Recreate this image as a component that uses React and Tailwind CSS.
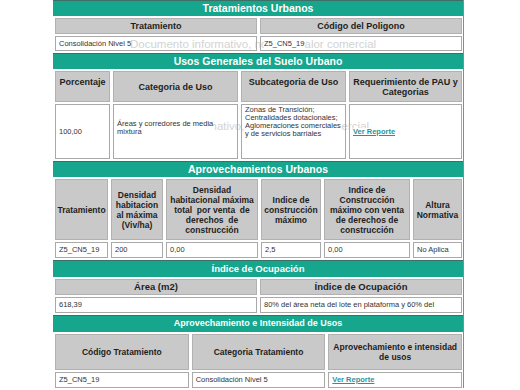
import React from 'react';

const Bar = ({ children, size = 'text-[10.5px]', h = 'h-[16px]' }) => (
  <div className={`${h} -ml-[2px] -mr-[1px] bg-[#16a68d] border-t border-[#3d6f66] flex items-center justify-center text-white font-bold ${size}`}>
    {children}
  </div>
);

const Hd = ({ children, w = 'flex-1', size = 'text-[8.5px]', align = 'items-center', extra = '' }) => (
  <div className={`${w} bg-[#c9c9c9] border border-[#b1b1b1] flex ${align} justify-center text-center font-bold ${size} leading-[10px] text-[#1e1e1e] ${extra}`}>
    <div>{children}</div>
  </div>
);

const Td = ({ children, w = 'flex-1', align = 'items-center', extra = '' }) => (
  <div className={`relative ${w} border border-[#a9a9a9] flex ${align} px-[3px] text-[7.5px] leading-[8px] text-[#333] ${extra}`}>
    <span className="bg-white">{children}</span>
  </div>
);

const Link = () => (
  <span className="font-bold underline text-[#1f95a0]">Ver Reporte</span>
);

export default function App() {
  return (
    <div className="min-h-[390px] bg-white" style={{ fontFamily: '"Liberation Sans", Arial, sans-serif' }}>
      <div className="relative ml-[53px] w-[411px] border-r border-[#8a8a8a] pl-[2px] pr-[1px] flex flex-col gap-[2px]">
        {/* marcas de agua */}
        <div className="absolute left-[77px] top-[38px] text-[11.5px] leading-[13px] text-[#d3d3d3] whitespace-nowrap">
          Documento informativo, no tiene valor comercial
        </div>
        <div className="absolute left-[70px] top-[120px] text-[11.5px] leading-[13px] text-[#d3d3d3] whitespace-nowrap">
          Documento informativo, no tiene valor comercial
        </div>

        {/* Tratamientos Urbanos */}
        <Bar>Tratamientos Urbanos</Bar>
        <div className="flex gap-[3px] h-[16px]">
          <Hd size="text-[9px]">Tratamiento</Hd>
          <Hd size="text-[9px]">Código del Poligono</Hd>
        </div>
        <div className="flex gap-[3px] h-[15px]">
          <Td>Consolidación Nivel 5</Td>
          <Td>Z5_CN5_19</Td>
        </div>

        {/* Usos Generales */}
        <Bar>Usos Generales del Suelo Urbano</Bar>
        <div className="flex gap-[3px] h-[31px]">
          <Hd w="w-[55px]" size="text-[9px]" align="items-start" extra="pt-[5px]">Porcentaje</Hd>
          <Hd w="w-[125px]" size="text-[9px]">Categoria de Uso</Hd>
          <Hd w="w-[105px]" size="text-[9px]" align="items-start" extra="pt-[5px]">Subcategoria de Uso</Hd>
          <Hd w="flex-1" size="text-[9px]" align="items-start" extra="pt-[5px]">Requerimiento de PAU y<br />Categorias</Hd>
        </div>
        <div className="flex gap-[3px] h-[55px]">
          <Td w="w-[55px]">100,00</Td>
          <Td w="w-[125px]" extra="pb-[8px]">Áreas y corredores de media<br />mixtura</Td>
          <Td w="w-[105px]" align="items-start" extra="pt-[1px]">
            Zonas de Transición;<br />Centralidades dotacionales;<br />Aglomeraciones comerciales<br />y de servicios barriales
          </Td>
          <Td w="flex-1"><Link /></Td>
        </div>

        {/* Aprovechamientos */}
        <Bar>Aprovechamientos Urbanos</Bar>
        <div className="flex gap-[3px] h-[61px]">
          <Hd w="w-[53px]">Tratamiento</Hd>
          <Hd w="w-[52px]">Densidad<br />habitacion<br />al máxima<br />(Viv/ha)</Hd>
          <Hd w="w-[92px]">Densidad<br />habitacional máxima<br />total&nbsp; por venta&nbsp; de<br />derechos&nbsp; de<br />construcción</Hd>
          <Hd w="w-[60px]">Indice de<br />construcción<br />máximo</Hd>
          <Hd w="w-[86px]">Indice de<br />Construcción<br />máximo con venta<br />de derechos de<br />construcción</Hd>
          <Hd w="flex-1">Altura<br />Normativa</Hd>
        </div>
        <div className="flex gap-[3px] h-[16px]">
          <Td w="w-[53px]">Z5_CN5_19</Td>
          <Td w="w-[52px]">200</Td>
          <Td w="w-[92px]">0,00</Td>
          <Td w="w-[60px]">2,5</Td>
          <Td w="w-[86px]">0,00</Td>
          <Td w="flex-1">No Aplica</Td>
        </div>

        {/* Índice de Ocupación */}
        <Bar size="text-[9.5px]" h="h-[17px]">Índice de Ocupación</Bar>
        <div className="flex gap-[3px] h-[16px]">
          <Hd size="text-[9.5px]">Área (m2)</Hd>
          <Hd size="text-[9.5px]">Índice de Ocupación</Hd>
        </div>
        <div className="flex gap-[3px] h-[16px]">
          <Td>618,39</Td>
          <Td>80% del área neta del lote en plataforma y 60% del</Td>
        </div>

        {/* Aprovechamiento e Intensidad */}
        <Bar size="text-[9px]" h="h-[17px]">Aprovechamiento e Intensidad de Usos</Bar>
        <div className="flex gap-[3px] h-[36px]">
          <Hd size="text-[8.5px]">Código Tratamiento</Hd>
          <Hd size="text-[8.5px]">Categoria Tratamiento</Hd>
          <Hd size="text-[8.5px]">Aprovechamiento e intensidad<br />de usos</Hd>
        </div>
        <div className="flex gap-[3px] h-[16px]">
          <Td>Z5_CN5_19</Td>
          <Td>Consolidación Nivel 5</Td>
          <Td><Link /></Td>
        </div>
      </div>
    </div>
  );
}
